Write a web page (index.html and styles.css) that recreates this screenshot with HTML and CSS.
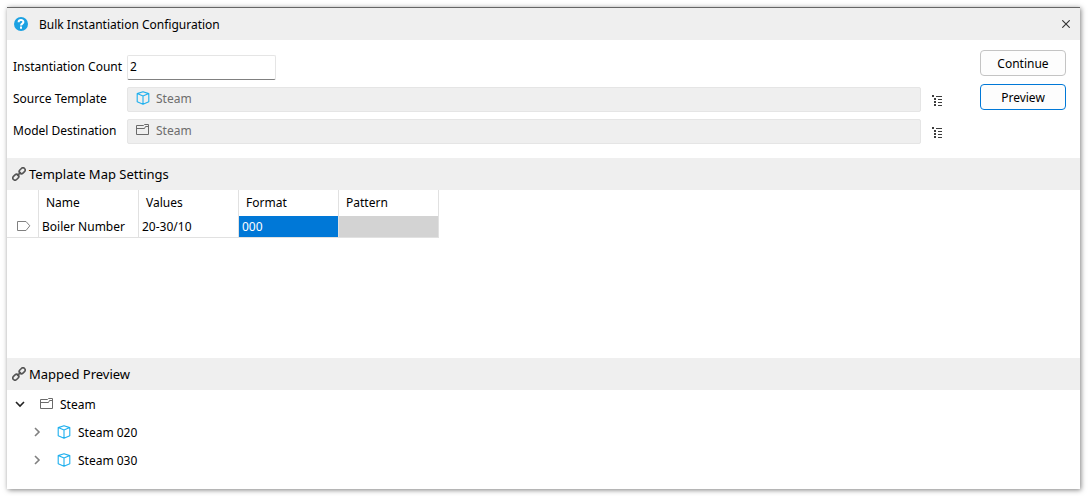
FILE: index.html
```html
<!DOCTYPE html>
<html lang="en">
<head>
    <meta charset="UTF-8">
    <meta name="viewport" content="width=device-width, initial-scale=1.0">
    <title>Bulk Instantiation Configuration</title>
    <link rel="stylesheet" href="styles.css">
</head>
<body>
    <!-- shared icons -->
    <svg class="sprite" aria-hidden="true">
        <symbol id="cube" viewBox="0 0 14 14">
            <path d="M7 0.8 L12.8 2.6 V10.8 L7 13.3 L1.2 10.8 V2.6 Z M1.2 2.6 L7 5 L12.8 2.6 M7 5 V13.3" fill="none" stroke="#1fb0ee" stroke-width="1.1" stroke-linejoin="round"/>
        </symbol>
        <symbol id="folder" viewBox="0 0 14 12">
            <path d="M0.5 1.5 H7.5 L8.5 0.5 H12.5 V10.5 H0.5 Z M0.5 4.5 H8.5 L9.5 2.5 H12.5" fill="none" stroke="#6a6a6a"/>
        </symbol>
        <symbol id="link" viewBox="0 0 14 14">
            <g transform="rotate(-45 7 7)" fill="none" stroke="#555" stroke-width="1.6">
                <rect x="-0.8" y="4.8" width="6.6" height="4.4" rx="2.2"/>
                <rect x="8.2" y="4.8" width="6.6" height="4.4" rx="2.2"/>
                <path d="M4.4 7 H9.6"/>
            </g>
        </symbol>
        <symbol id="tree" viewBox="0 0 11 12">
            <path d="M0 0h2v2h-2z M2 3h2v2h-2z M2 6h2v2h-2z M2 9h2v2h-2z M4 1h6v1h-6z M6 4h4v1h-4z M6 7h4v1h-4z M6 10h4v1h-4z" fill="#3c3c3c"/>
        </symbol>
        <symbol id="chevron" viewBox="0 0 10 10">
            <path d="M3 1 L7 5 L3 9" fill="none" stroke="#808080" stroke-width="1.6"/>
        </symbol>
    </svg>

    <main class="window">
        <header class="title-bar">
            <svg class="help-icon" viewBox="0 0 14 14" aria-hidden="true">
                <circle cx="7" cy="7" r="7" fill="#1ba1e2"/>
                <path d="M4.6 5.2 C4.6 2.3 9.4 2.4 9.4 5 C9.4 6.6 7 6.6 7 8.6 M7 9.6 V11.7" fill="none" stroke="#fff" stroke-width="2"/>
            </svg>
            <h1>Bulk Instantiation Configuration</h1>
            <button class="close" type="button" aria-label="Close">
                <svg viewBox="0 0 8 8" aria-hidden="true"><path d="M0.3 0.3 L7.7 7.7 M7.7 0.3 L0.3 7.7" fill="none" stroke="#333" stroke-width="1.1"/></svg>
            </button>
        </header>

        <form class="settings">
            <div class="fields">
                <div class="field">
                    <label for="count">Instantiation Count</label>
                    <input class="count" type="text" id="count" value="2">
                </div>
                <div class="field">
                    <label for="template">Source Template</label>
                    <div class="picker">
                        <svg class="cube"><use href="#cube"/></svg>
                        <input type="text" id="template" value="Steam" disabled>
                    </div>
                    <button class="browse" type="button" aria-label="Browse templates"><svg><use href="#tree"/></svg></button>
                </div>
                <div class="field">
                    <label for="destination">Model Destination</label>
                    <div class="picker">
                        <svg class="folder"><use href="#folder"/></svg>
                        <input type="text" id="destination" value="Steam" disabled>
                    </div>
                    <button class="browse" type="button" aria-label="Browse destinations"><svg><use href="#tree"/></svg></button>
                </div>
            </div>
            <div class="actions">
                <button class="action" type="button">Continue</button>
                <button class="action primary" type="button">Preview</button>
            </div>
        </form>

        <section class="map">
            <h2><svg><use href="#link"/></svg>Template Map Settings</h2>
            <table>
                <thead>
                    <tr>
                        <th class="marker"></th>
                        <th>Name</th>
                        <th>Values</th>
                        <th>Format</th>
                        <th>Pattern</th>
                    </tr>
                </thead>
                <tbody>
                    <tr>
                        <td class="marker"><svg viewBox="0 0 14 10" aria-hidden="true"><path d="M0.5 0.5 H9 L12.8 4.8 L9 9.5 H0.5 Z" fill="none" stroke="#808080"/></svg></td>
                        <td>Boiler Number</td>
                        <td>20-30/10</td>
                        <td class="selected">000</td>
                        <td class="disabled"></td>
                    </tr>
                </tbody>
            </table>
        </section>

        <section class="preview">
            <h2><svg><use href="#link"/></svg>Mapped Preview</h2>
            <ul class="tree">
                <li>
                    <div class="node">
                        <svg class="chevron" viewBox="0 0 10 10"><path d="M1 3 L5 7 L9 3" fill="none" stroke="#222" stroke-width="1.6"/></svg>
                        <svg class="folder"><use href="#folder"/></svg>
                        <span>Steam</span>
                    </div>
                    <ul>
                        <li class="node">
                            <svg class="chevron"><use href="#chevron"/></svg>
                            <svg class="cube"><use href="#cube"/></svg>
                            <span>Steam 020</span>
                        </li>
                        <li class="node">
                            <svg class="chevron"><use href="#chevron"/></svg>
                            <svg class="cube"><use href="#cube"/></svg>
                            <span>Steam 030</span>
                        </li>
                    </ul>
                </li>
            </ul>
        </section>
    </main>
</body>
</html>
```
FILE: styles.css
```css
* {
    box-sizing: border-box;
}
body {
    margin: 0;
    padding: 7px 8px 7px 7px;
    background-color: #fff;
    color: #000;
    font-family: "Noto Sans", "Open Sans", sans-serif;
    font-size: 12px;
    line-height: 20px;
}
h1, h2 {
    margin: 0;
    font-size: 12px;
    font-weight: normal;
}
h1 {
    padding-top: 2px;
}
svg {
    display: block;
    flex: none;
}
button, input {
    font: inherit;
    color: inherit;
}
.sprite {
    position: absolute;
    width: 0;
    height: 0;
}
.cube {
    width: 14px;
    height: 14px;
}
.folder {
    width: 14px;
    height: 12px;
}
.window {
    border-top: 1px solid #666;
    background-color: #fff;
    box-shadow: 1px 1px 5px rgba(0, 0, 0, 0.5);
}
.title-bar {
    display: flex;
    align-items: center;
    height: 32px;
    padding: 0 6px;
    background-color: #efefef;
}
.help-icon {
    width: 16px;
    height: 14px;
    margin-right: 10px;
}
.close {
    margin-left: auto;
    padding: 4px;
    border: none;
    background: none;
}
.close svg {
    width: 8px;
    height: 8px;
}
.settings {
    display: flex;
    gap: 37px;
    padding: 10px 14px 14px 6px;
}
.fields {
    flex: 1;
    display: flex;
    flex-direction: column;
    gap: 7px;
    padding-top: 5px;
}
.field {
    display: flex;
    align-items: center;
    height: 25px;
}
.field label {
    flex: none;
    width: 114px;
    padding-bottom: 1px;
    white-space: nowrap;
}
.count {
    width: 149px;
    height: 25px;
    padding: 0 2px 2px;
    border: 1px solid #e5e5e5;
    border-bottom-color: #808080;
    border-radius: 2px;
    background-color: #fff;
}
.picker {
    flex: 1;
    display: flex;
    align-items: center;
    gap: 6px;
    height: 25px;
    padding: 0 8px 3px;
    border: 1px solid #e5e5e5;
    border-radius: 2px;
    background-color: #efefef;
}
.picker input {
    flex: 1;
    padding: 2px 0 0;
    border: none;
    background: none;
    color: #6d6d6d;
}
.browse {
    margin-left: 11px;
    padding: 2px 0 0;
    border: none;
    background: none;
}
.browse svg {
    width: 11px;
    height: 12px;
}
.actions {
    display: flex;
    flex-direction: column;
    gap: 8px;
}
.action {
    width: 86px;
    height: 26px;
    padding: 2px 0 0;
    border: 1px solid #c4c4c4;
    border-radius: 4px;
    background-color: #fdfdfd;
}
.primary {
    border-color: #0078d7;
}
h2 {
    display: flex;
    align-items: center;
    gap: 3px;
    height: 32px;
    padding: 0 5px;
    background-color: #efefef;
    font-size: 13px;
}
h2 svg {
    width: 14px;
    height: 14px;
}
.map {
    min-height: 200px;
}
table {
    border-collapse: separate;
    border-spacing: 0;
    table-layout: fixed;
    width: 432px;
    border-bottom: 1px solid #e1e1e1;
}
th, td {
    width: 100px;
    padding: 0 3px;
    border-right: 1px solid #e1e1e1;
    text-align: left;
    font-weight: normal;
    white-space: nowrap;
}
th {
    height: 26px;
    padding: 0 7px;
}
td {
    height: 21px;
    padding-top: 1px;
}
.marker {
    width: 32px;
    padding: 0 10px 2px;
}
.marker svg {
    width: 14px;
    height: 10px;
}
.selected {
    background-color: #0078d7;
    color: #fff;
}
.disabled {
    background-color: #d3d3d3;
}
.tree, .tree ul {
    margin: 0;
    padding: 0;
    list-style: none;
}
.tree {
    padding: 0 8px 15px;
}
.tree ul {
    padding-left: 17px;
}
.node {
    display: flex;
    align-items: center;
    height: 28px;
}
.chevron {
    width: 10px;
    height: 10px;
    margin-right: 15px;
}
.node span {
    margin-left: 6px;
    padding-top: 2px;
}
.tree ul span {
    margin-left: 7px;
}
```
